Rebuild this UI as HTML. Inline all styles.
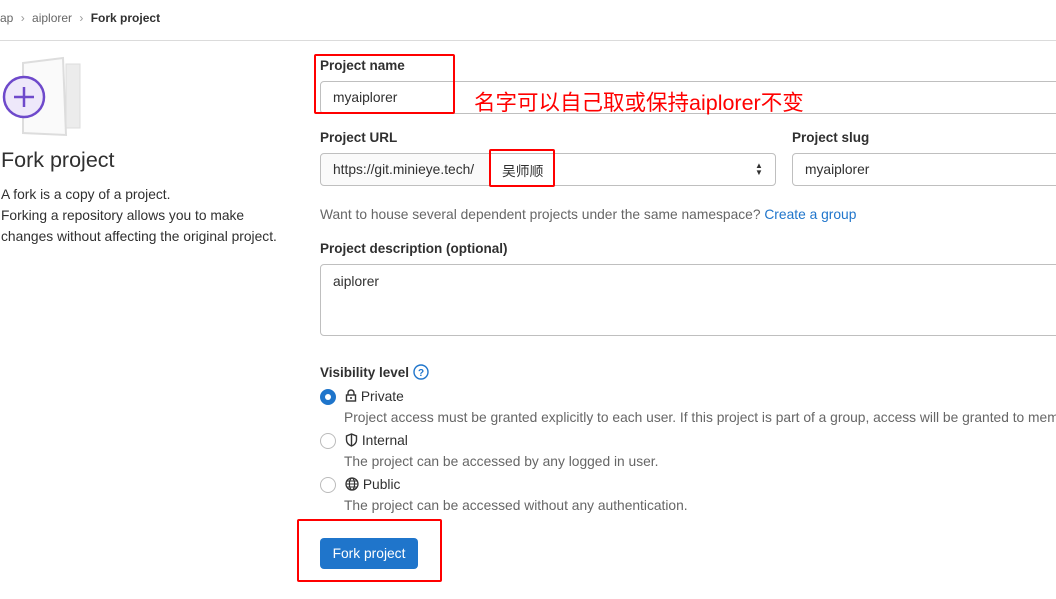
<!DOCTYPE html>
<html><head><meta charset="utf-8"><style>
*{box-sizing:border-box;margin:0;padding:0}
body{width:1056px;height:599px;overflow:hidden;background:#fff;font-family:"Liberation Sans","Noto Sans CJK SC",sans-serif;color:#303030;font-size:13.8px}
#w{position:relative;width:1056px;height:599px;overflow:hidden}
.a{position:absolute;white-space:nowrap}
.lbl{font-weight:bold;font-size:13.5px;color:#303030}
.inp{position:absolute;border:1px solid #bfbfbf;border-radius:4px;background:#fff;font-size:13.8px;color:#303030;padding-left:12px;display:flex;align-items:center}
.red{position:absolute;border:2px solid #f00;border-radius:2px}
.help{color:#666;font-size:13.8px}
.radio{position:absolute;width:16px;height:16px;border-radius:50%;border:1px solid #bbb;background:#fff}
</style></head><body><div id="w">
<div class="a" style="left:0;top:11px;font-size:12px;color:#666">ap <span style="margin:0 4px;color:#999">›</span> aiplorer <span style="margin:0 4px;color:#999">›</span> <b style="color:#303030">Fork project</b></div>
<div class="a" style="left:0;top:40px;width:1056px;height:1px;background:#dbdbdb"></div>

<svg class="a" style="left:0;top:55px" width="85" height="85" viewBox="0 0 85 85">
<rect x="66" y="9" width="14" height="64" fill="#ececec" stroke="#ddd"/>
<path d="M23 8 L63 3 L66 80 L23 78 Z" fill="#fafafa" stroke="#ddd" stroke-width="2"/>
<circle cx="24" cy="42" r="20" fill="#eee8fa" stroke="#6e49cb" stroke-width="2.5"/>
<path d="M24 32v20M14 42h20" stroke="#6e49cb" stroke-width="2.5"/>
</svg>
<div class="a" style="left:1px;top:148px;font-size:21.5px;color:#303030">Fork project</div>
<div class="a" style="left:1px;top:184px;font-size:13.8px;line-height:21px;color:#303030">A fork is a copy of a project.<br>Forking a repository allows you to make<br>changes without affecting the original project.</div>

<div class="a lbl" style="left:320px;top:58px">Project name</div>
<div class="inp" style="left:320px;top:81px;width:760px;height:33px">myaiplorer</div>
<div class="red" style="left:314px;top:54px;width:141px;height:60px"></div>
<div class="a" style="left:474px;top:86px;font-size:21.5px;color:#f00">名字可以自己取或保持aiplorer不变</div>

<div class="a lbl" style="left:320px;top:130px">Project URL</div>
<div class="inp" style="left:320px;top:153px;width:170px;height:33px;background:#fafafa;border-radius:4px 0 0 4px">https://git.minieye.tech/</div>
<div class="inp" style="left:489px;top:153px;width:287px;height:33px;border-radius:0 4px 4px 0">吴师顺</div>
<div class="a" style="left:755px;top:162px;font-size:8px;line-height:7px">▲<br>▼</div>
<div class="red" style="left:489px;top:149px;width:66px;height:38px"></div>
<div class="a lbl" style="left:792px;top:130px">Project slug</div>
<div class="inp" style="left:792px;top:153px;width:300px;height:33px">myaiplorer</div>

<div class="a help" style="left:320px;top:207px">Want to house several dependent projects under the same namespace? <span style="color:#1f75cb">Create a group</span></div>
<div class="a lbl" style="left:320px;top:241px">Project description (optional)</div>
<div class="inp" style="left:320px;top:264px;width:760px;height:72px;align-items:flex-start;padding-top:9px">aiplorer</div>

<div class="a lbl" style="left:320px;top:364px">Visibility level <svg width="16" height="16" viewBox="0 0 16 16" style="vertical-align:-3px"><circle cx="8" cy="8" r="7" fill="none" stroke="#1f75cb" stroke-width="1.4"/><text x="8" y="12" font-size="10" text-anchor="middle" fill="#1f75cb" font-family="Liberation Sans">?</text></svg></div>
<div class="radio" style="left:320px;top:389px;background:#1f75cb;border-color:#1f75cb"><div style="width:6px;height:6px;background:#fff;border-radius:50%;margin:4px"></div></div>
<div class="a" style="left:345px;top:389px">
<svg width="12" height="13" viewBox="0 0 12 13" style="vertical-align:-1px"><path d="M3 6V4a3 3 0 016 0v2" fill="none" stroke="#333" stroke-width="1.4"/><rect x="1.5" y="6" width="9" height="6" fill="none" stroke="#333" stroke-width="1.4"/><circle cx="6" cy="9" r="1" fill="#333"/></svg> Private</div>
<div class="a help" style="left:344px;top:410px">Project access must be granted explicitly to each user. If this project is part of a group, access will be granted to members of the group.</div>
<div class="radio" style="left:320px;top:433px"></div>
<div class="a" style="left:345px;top:433px"><svg width="13" height="14" viewBox="0 0 13 14" style="vertical-align:-2px"><path d="M6.5 1L1.5 3v4c0 3 2.5 5 5 6 2.5-1 5-3 5-6V3z" fill="none" stroke="#333" stroke-width="1.4"/><path d="M6.5 1v12" stroke="#333" stroke-width="1.4"/></svg> Internal</div>
<div class="a help" style="left:344px;top:454px">The project can be accessed by any logged in user.</div>
<div class="radio" style="left:320px;top:477px"></div>
<div class="a" style="left:345px;top:477px"><svg width="14" height="14" viewBox="0 0 14 14" style="vertical-align:-2px"><circle cx="7" cy="7" r="6" fill="none" stroke="#333" stroke-width="1.3"/><ellipse cx="7" cy="7" rx="2.6" ry="6" fill="none" stroke="#333" stroke-width="1.2"/><path d="M1 7h12M2 4h10M2 10h10" stroke="#333" stroke-width="1"/></svg> Public</div>
<div class="a help" style="left:344px;top:498px">The project can be accessed without any authentication.</div>

<div class="a" style="left:320px;top:538px;width:98px;height:31px;background:#1f75cb;border-radius:4px;color:#fff;font-size:13.8px;display:flex;align-items:center;justify-content:center">Fork project</div>
<div class="red" style="left:297px;top:519px;width:145px;height:63px"></div>
</div></body></html>
